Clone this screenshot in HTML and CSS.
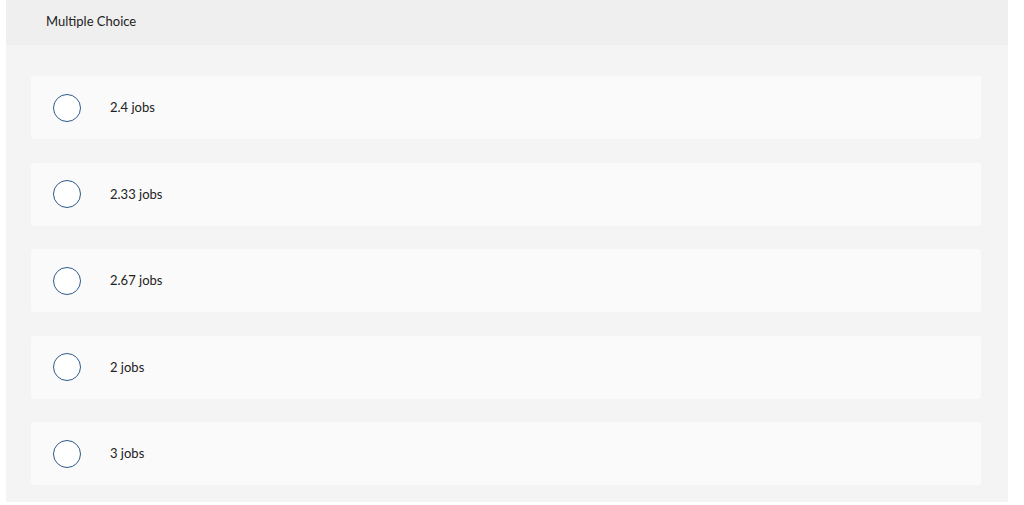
FILE: index.html
```html
<!DOCTYPE html>
<html lang="en">
<head>
    <meta charset="UTF-8">
    <title>Multiple Choice</title>
    <link rel="stylesheet" href="styles.css">
</head>
<body>
    <div class="question">
        <div class="question-header">Multiple Choice</div>
        <div class="choices">
            <label class="choice">
                <span class="radio"></span>
                <span class="choice-text">2.4 jobs</span>
            </label>
            <label class="choice">
                <span class="radio"></span>
                <span class="choice-text">2.33 jobs</span>
            </label>
            <label class="choice">
                <span class="radio"></span>
                <span class="choice-text">2.67 jobs</span>
            </label>
            <label class="choice">
                <span class="radio"></span>
                <span class="choice-text">2 jobs</span>
            </label>
            <label class="choice">
                <span class="radio"></span>
                <span class="choice-text">3 jobs</span>
            </label>
        </div>
    </div>
</body>
</html>
```

FILE: styles.css
```css
* {
    margin: 0;
    padding: 0;
    box-sizing: border-box;
    font-family: 'Lato', 'Open Sans', sans-serif;
}

body {
    background: #ffffff;
    color: #222222;
    padding: 0 16px 0 6px;
}

.question {
    background: #f4f4f4;
    padding-bottom: 17px;
}

.question-header {
    background: #efefef;
    height: 45px;
    padding: 13px 0 0 40px;
    font-size: 13px;
    color: #222222;
}

.choices {
    display: flex;
    flex-direction: column;
    gap: 23.5px;
    padding: 31px 27px 0 25px;
}

.choice {
    display: flex;
    align-items: center;
    height: 63px;
    background: #fafafa;
    border-radius: 3px;
    padding-left: 22px;
    cursor: pointer;
}

.radio {
    width: 28px;
    height: 28px;
    border-radius: 50%;
    border: 1.3px solid #2d5b8c;
    background: #ffffff;
    flex-shrink: 0;
}

.choice-text {
    margin-left: 29px;
    margin-bottom: 1px;
    font-size: 13px;
    color: #222222;
}
```
